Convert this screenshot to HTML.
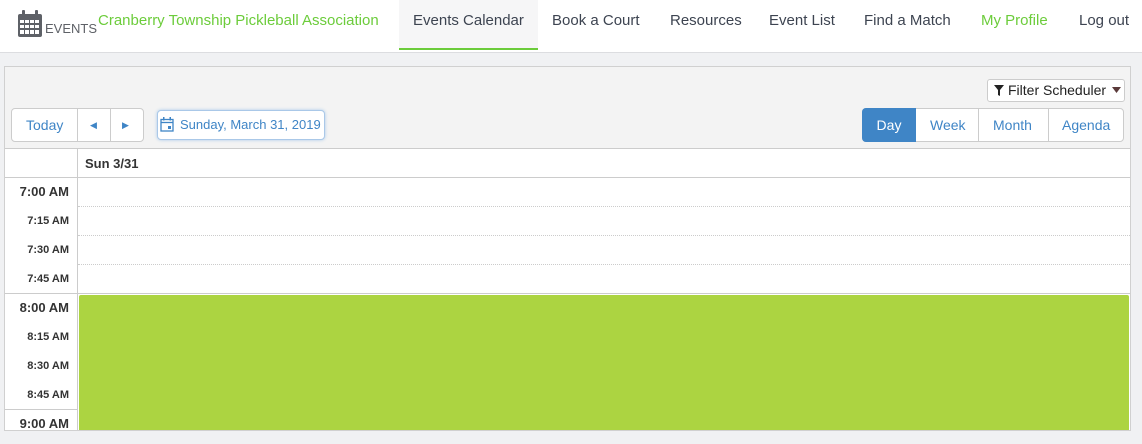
<!DOCTYPE html>
<html><head><style>
*{margin:0;padding:0;box-sizing:border-box}
body{width:1142px;height:444px;background:#f0f1f3;font-family:"Liberation Sans",sans-serif;position:relative;overflow:hidden}
.a{position:absolute;white-space:nowrap}
.nav{font-size:15px;color:#3d4451;top:12px}
.hdr{position:absolute;left:0;top:0;width:1142px;height:53px;background:#fff;border-bottom:1px solid #dcdde0}
.btn{position:absolute;border:1px solid #ccc;background:#fff;color:#3f85c6;font-size:14px;text-align:center}
.tl{font-size:11px;font-weight:bold;color:#333;text-align:right;width:64px;left:5px}
.th{font-size:13px}
</style></head><body>
<div class="hdr"></div>
<div class="a" style="left:399px;top:0;width:139px;height:50px;background:#f6f6f7;border-bottom:2px solid #6ccc3b"></div>
<svg class="a" style="left:17px;top:10px" width="26" height="28" viewBox="0 0 26 28"><rect x="1" y="4" width="24" height="23" rx="2" fill="#5e6167"/><rect x="5" y="0" width="3" height="7" rx="1" fill="#5e6167"/><rect x="18" y="0" width="3" height="7" rx="1" fill="#5e6167"/><g fill="#fff"><rect x="3" y="10" width="4" height="3"/><rect x="8" y="10" width="4" height="3"/><rect x="13" y="10" width="4" height="3"/><rect x="18" y="10" width="4" height="3"/><rect x="3" y="15" width="4" height="3"/><rect x="8" y="15" width="4" height="3"/><rect x="13" y="15" width="4" height="3"/><rect x="18" y="15" width="4" height="3"/><rect x="3" y="20" width="4" height="4"/><rect x="8" y="20" width="4" height="4"/><rect x="13" y="20" width="4" height="4"/><rect x="18" y="20" width="4" height="4"/></g></svg>
<div class="a" style="left:45px;top:21px;font-size:13px;color:#5e6167">EVENTS</div>
<div class="a nav" style="left:98px;color:#6ccc3b">Cranberry Township Pickleball Association</div>
<div class="a nav" style="left:413px">Events Calendar</div>
<div class="a nav" style="left:552px">Book a Court</div>
<div class="a nav" style="left:670px">Resources</div>
<div class="a nav" style="left:769px">Event List</div>
<div class="a nav" style="left:864px">Find a Match</div>
<div class="a nav" style="left:981px;color:#6ccc3b">My Profile</div>
<div class="a nav" style="left:1079px">Log out</div>

<div class="a" style="left:4px;top:66px;width:1127px;height:365px;background:#f3f3f3;border:1px solid #d0d0d0"></div>
<div class="btn" style="left:987px;top:79px;width:138px;height:23px;border-radius:3px"></div>
<svg class="a" style="left:994px;top:85px" width="10" height="11" viewBox="0 0 10 11"><path d="M0 0H10L6 5V11L4 10V5Z" fill="#222"/></svg>
<div class="a" style="left:1008px;top:82px;font-size:14px;color:#222">Filter Scheduler</div>
<svg class="a" style="left:1112px;top:87px" width="9" height="6" viewBox="0 0 9 6"><path d="M0 0H9L4.5 6Z" fill="#5a3a3a"/></svg>
<div class="btn" style="left:11px;top:108px;width:133px;height:34px;border-radius:4px"></div>
<div class="a" style="left:26px;top:117px;font-size:14px;color:#3f85c6">Today</div>
<div class="a" style="left:77px;top:109px;width:1px;height:32px;background:#ccc"></div>
<div class="a" style="left:110px;top:109px;width:1px;height:32px;background:#ccc"></div>
<div class="a" style="left:90px;top:120px;font-size:9px;color:#3f85c6">&#9664;</div>
<div class="a" style="left:122px;top:120px;font-size:9px;color:#3f85c6">&#9654;</div>
<div class="btn" style="left:157px;top:110px;width:168px;height:30px;border-radius:4px;border-color:#aac8e8;box-shadow:0 0 3px #a9c9ea"></div>
<svg class="a" style="left:160px;top:117px" width="14" height="15" viewBox="0 0 14 15"><rect x="1" y="2.5" width="12" height="11.5" fill="none" stroke="#3f85c6" stroke-width="1.3"/><line x1="1" y1="5.5" x2="13" y2="5.5" stroke="#3f85c6" stroke-width="1.3"/><rect x="3" y="0" width="1.5" height="3.5" fill="#3f85c6"/><rect x="9.5" y="0" width="1.5" height="3.5" fill="#3f85c6"/><rect x="8" y="9" width="3" height="3" fill="#3f85c6"/></svg>
<div class="a" style="left:180px;top:117px;font-size:13px;color:#3f85c6">Sunday, March 31, 2019</div>
<div class="btn" style="left:862px;top:108px;width:262px;height:34px;border-radius:4px"></div>
<div class="a" style="left:862px;top:108px;width:54px;height:34px;background:#3f85c6;border-radius:4px 0 0 4px;color:#fff;font-size:14px;text-align:center;line-height:34px">Day</div>
<div class="a" style="left:930px;top:117px;font-size:14px;color:#3f85c6">Week</div>
<div class="a" style="left:978px;top:109px;width:1px;height:32px;background:#ccc"></div>
<div class="a" style="left:993px;top:117px;font-size:14px;color:#3f85c6">Month</div>
<div class="a" style="left:1048px;top:109px;width:1px;height:32px;background:#ccc"></div>
<div class="a" style="left:1062px;top:117px;font-size:14px;color:#3f85c6">Agenda</div>

<div class="a" style="left:5px;top:148px;width:1125px;height:282px;background:#fff;border-top:1px solid #ccc"></div>
<div class="a" style="left:77px;top:148px;width:1px;height:282px;background:#ccc"></div>
<div class="a" style="left:85px;top:156px;font-size:13px;font-weight:bold;color:#333">Sun 3/31</div>
<div class="a" style="left:5px;top:177px;width:1125px;height:1px;background:#ccc"></div>
<div class="a" style="left:78px;top:206px;width:1052px;border-top:1px dotted #ccc"></div>
<div class="a" style="left:78px;top:235px;width:1052px;border-top:1px dotted #ccc"></div>
<div class="a" style="left:78px;top:264px;width:1052px;border-top:1px dotted #ccc"></div>
<div class="a" style="left:5px;top:293px;width:1125px;height:1px;background:#ccc"></div>
<div class="a" style="left:5px;top:409px;width:73px;height:1px;background:#ccc"></div>
<div class="a" style="left:79px;top:295px;width:1050px;height:135px;background:#acd441;border-radius:2px 2px 0 0"></div>
<div class="a tl th" style="top:184px">7:00 AM</div>
<div class="a tl" style="top:215px">7:15 AM</div>
<div class="a tl" style="top:244px">7:30 AM</div>
<div class="a tl" style="top:273px">7:45 AM</div>
<div class="a tl th" style="top:300px">8:00 AM</div>
<div class="a tl" style="top:331px">8:15 AM</div>
<div class="a tl" style="top:360px">8:30 AM</div>
<div class="a tl" style="top:389px">8:45 AM</div>
<div class="a tl th" style="top:416px">9:00 AM</div>
</body></html>
